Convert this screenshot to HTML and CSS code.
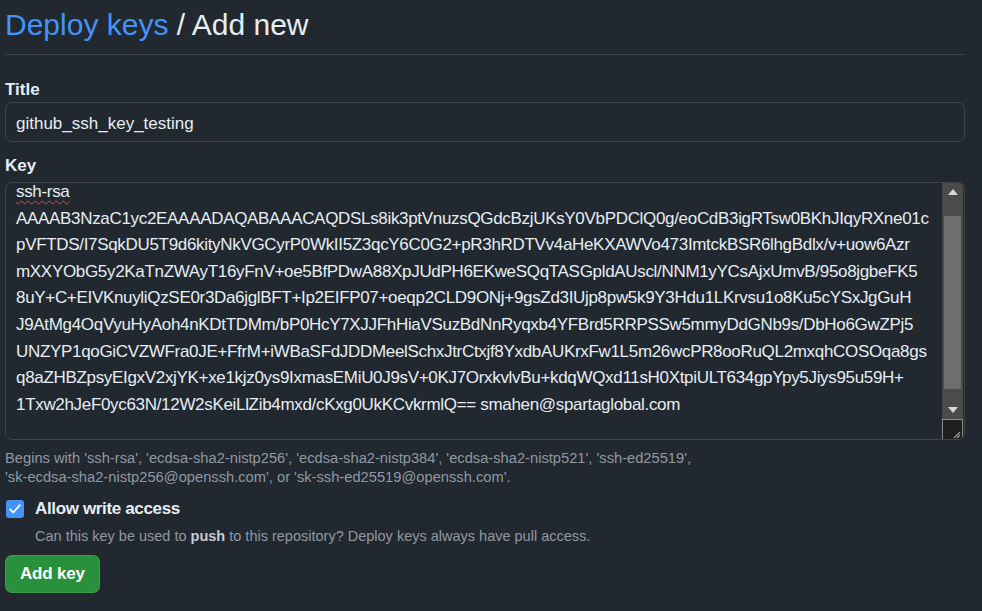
FILE: index.html
```html
<!DOCTYPE html>
<html>
<head>
<meta charset="utf-8">
<link rel="stylesheet" href="styles.css">
</head>
<body>
<div class="page">
  <div class="subhead">
    <h2 class="subhead-heading"><a class="crumb" href="#">Deploy keys</a> / Add new</h2>
  </div>
  <form class="form">
    <div class="group">
      <label class="label">Title</label>
      <div class="input">github_ssh_key_testing</div>
    </div>
    <div class="group group-key">
      <label class="label">Key</label>
      <div class="key-box">
        <div class="key-text">
          <div class="scroller">
            <span class="line"><span class="misspelled">ssh-rsa</span></span>
            <span class="line">AAAAB3NzaC1yc2EAAAADAQABAAACAQDSLs8ik3ptVnuzsQGdcBzjUKsY0VbPDClQ0g/eoCdB3igRTsw0BKhJIqyRXne01c</span>
            <span class="line">pVFTDS/I7SqkDU5T9d6kityNkVGCyrP0WkII5Z3qcY6C0G2+pR3hRDTVv4aHeKXAWVo473ImtckBSR6lhgBdlx/v+uow6Azr</span>
            <span class="line">mXXYObG5y2KaTnZWAyT16yFnV+oe5BfPDwA88XpJUdPH6EKweSQqTASGpldAUscl/NNM1yYCsAjxUmvB/95o8jgbeFK5</span>
            <span class="line">8uY+C+EIVKnuyliQzSE0r3Da6jglBFT+Ip2EIFP07+oeqp2CLD9ONj+9gsZd3IUjp8pw5k9Y3Hdu1LKrvsu1o8Ku5cYSxJgGuH</span>
            <span class="line">J9AtMg4OqVyuHyAoh4nKDtTDMm/bP0HcY7XJJFhHiaVSuzBdNnRyqxb4YFBrd5RRPSSw5mmyDdGNb9s/DbHo6GwZPj5</span>
            <span class="line">UNZYP1qoGiCVZWFra0JE+FfrM+iWBaSFdJDDMeelSchxJtrCtxjf8YxdbAUKrxFw1L5m26wcPR8ooRuQL2mxqhCOSOqa8gs</span>
            <span class="line">q8aZHBZpsyEIgxV2xjYK+xe1kjz0ys9IxmasEMiU0J9sV+0KJ7OrxkvlvBu+kdqWQxd11sH0XtpiULT634gpYpy5Jiys95u59H+</span>
            <span class="line">1Txw2hJeF0yc63N/12W2sKeiLlZib4mxd/cKxg0UkKCvkrmlQ== smahen@spartaglobal.com</span>
          </div>
        </div>
        <div class="scrollbar">
          <div class="sb-track">
            <div class="sb-arrow">
              <svg width="10" height="6" viewBox="0 0 10 6"><path d="M0 6 L5 0 L10 6 Z" fill="#d8d8d8"/></svg>
            </div>
            <div class="sb-rail"><div class="sb-thumb"></div></div>
            <div class="sb-arrow">
              <svg width="10" height="6" viewBox="0 0 10 6"><path d="M0 0 L10 0 L5 6 Z" fill="#d8d8d8"/></svg>
            </div>
          </div>
          <div class="sb-corner">
            <svg width="10" height="10" viewBox="0 0 10 10"><path d="M9 3 L3 9 M9 6 L6 9" stroke="#9a9a9a" stroke-width="1.2"/></svg>
          </div>
        </div>
      </div>
      <p class="note">Begins with 'ssh-rsa', 'ecdsa-sha2-nistp256', 'ecdsa-sha2-nistp384', 'ecdsa-sha2-nistp521', 'ssh-ed25519',<br>'sk-ecdsa-sha2-nistp256@openssh.com', or 'sk-ssh-ed25519@openssh.com'.</p>
    </div>
    <div class="check">
      <div class="check-row">
        <span class="checkbox">
          <svg width="14" height="14" viewBox="0 0 16 16"><path d="M2.5 8.5 L6 12 L13.5 3.5" fill="none" stroke="#ffffff" stroke-width="2" stroke-linecap="round" stroke-linejoin="round"/></svg>
        </span>
        <span class="check-label">Allow write access</span>
      </div>
      <p class="check-note">Can this key be used to <strong>push</strong> to this repository? Deploy keys always have pull access.</p>
    </div>
    <button type="button" class="btn">Add key</button>
  </form>
</div>
</body>
</html>
```

FILE: styles.css
```css
html, body {
  margin: 0;
  padding: 0;
  background: #212830;
}
body {
  font-family: "Liberation Sans", Arial, sans-serif;
  color: #e6edf3;
}
.page {
  padding: 0 17px 0 5px;
}
.subhead {
  padding-top: 8px;
  padding-bottom: 12px;
  border-bottom: 1px solid #3d444d;
}
.subhead-heading {
  margin: 0;
  font-size: 30px;
  font-weight: 400;
  line-height: 34px;
  color: #e6edf3;
}
.crumb {
  color: #4493f8;
  text-decoration: none;
}
.form {
  padding-top: 24px;
}
.group {
  margin-bottom: 13px;
}
.group-key {
  margin-bottom: 11px;
}
.label {
  display: block;
  font-weight: 700;
  font-size: 17px;
  line-height: 22px;
  margin-bottom: 1px;
}
.input {
  border: 1px solid #3d444d;
  border-radius: 7px;
  padding: 3px 10px 0;
  box-sizing: content-box;
  height: 35px;
  font-size: 17px;
  line-height: 35px;
  background: #212830;
}
.key-box {
  display: flex;
  height: 256px;
  margin-top: 5px;
  border: 1px solid #3d444d;
  border-radius: 7px;
  overflow: hidden;
}
.key-text {
  flex: 1;
  overflow: hidden;
  padding: 0 10px;
}
.scroller {
  margin-top: -4px;
}
.line {
  display: block;
  white-space: nowrap;
  font-size: 17px;
  line-height: 26.6px;
  letter-spacing: -0.32px;
}
.misspelled {
  text-decoration: underline wavy #e5484d;
  text-decoration-thickness: 1px;
  text-underline-offset: 3px;
}
.scrollbar {
  width: 21px;
  margin-right: 1px;
  display: flex;
  flex-direction: column;
}
.sb-track {
  flex: 1;
  background: #4b4b4b;
  display: flex;
  flex-direction: column;
}
.sb-arrow {
  height: 18px;
  display: flex;
  align-items: center;
  justify-content: center;
}
.sb-rail {
  flex: 1;
  padding: 15px 2px 12px;
  display: flex;
}
.sb-thumb {
  flex: 1;
  background: #6e6e6e;
}
.sb-corner {
  height: 20px;
  background: #1e1e1e;
  border: 1px solid #8a8a8a;
  border-bottom: none;
  box-sizing: border-box;
  display: flex;
  align-items: flex-end;
  justify-content: flex-end;
  padding: 0 1px 0 0;
}
.note {
  margin: 9px 0 0;
  font-size: 14.7px;
  line-height: 19px;
  color: #9198a1;
}
.check {
  margin-top: 0;
}
.check-row {
  display: flex;
  align-items: center;
  gap: 11px;
}
.checkbox {
  width: 18px;
  height: 18px;
  margin-left: 1px;
  border-radius: 3px;
  background: #4493f8;
  display: flex;
  align-items: center;
  justify-content: center;
}
.check-label {
  font-weight: 700;
  font-size: 17px;
  line-height: 22px;
  letter-spacing: -0.35px;
}
.check-note {
  margin: 6px 0 0 30px;
  font-size: 14.5px;
  line-height: 20px;
  color: #9198a1;
}
.check-note strong {
  color: #c5ccd4;
}
.btn {
  margin-top: 9px;
  height: 38px;
  padding: 0 14px;
  border: 1px solid rgba(255,255,255,0.1);
  border-radius: 7px;
  background: #29903b;
  color: #ffffff;
  font-family: "Liberation Sans", Arial, sans-serif;
  font-weight: 700;
  font-size: 17px;
  letter-spacing: -0.2px;
}
```
